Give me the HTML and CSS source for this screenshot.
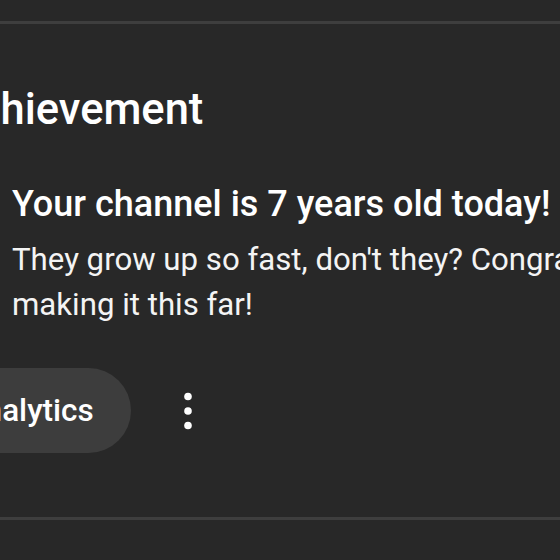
FILE: index.html
```html
<!DOCTYPE html>
<html lang="en">
<head>
<meta charset="utf-8">
<title>Achievement</title>
<link rel="stylesheet" href="styles.css">
</head>
<body>
<section class="card">
  <div class="inner">
    <h2 class="heading">Achievement</h2>
    <div class="content">
      <h3 class="title">Your channel is 7 years old today!</h3>
      <p class="desc">They grow up so fast, don't they? Congratulations on making it this far!</p>
    </div>
    <div class="actions">
      <button class="pill">Go to Analytics</button>
      <button class="more" aria-label="More actions">
        <svg width="60" height="60" viewBox="0 0 60 60" aria-hidden="true">
          <circle cx="30" cy="15.5" r="3.8" fill="#fff"/>
          <circle cx="30" cy="30" r="3.8" fill="#fff"/>
          <circle cx="30" cy="44.5" r="3.8" fill="#fff"/>
        </svg>
      </button>
    </div>
  </div>
</section>
</body>
</html>
```

FILE: styles.css
```css
html, body {
  margin: 0;
  padding: 0;
  background: #282828;
  overflow: hidden;
  width: 560px;
  height: 560px;
}

body {
  font-family: Roboto, "Liberation Sans", Arial, sans-serif;
  color: #fff;
}

.card {
  margin-top: 21px;
  border-top: 3px solid #3e3e3e;
  border-bottom: 3px solid #3e3e3e;
  height: 499px;
  box-sizing: border-box;
}

.inner {
  margin-left: -51px;
  padding-top: 60px;
}

.heading {
  margin: 0;
  font-size: 43.5px;
  line-height: 52px;
  font-weight: 500;
  white-space: nowrap;
}

.content {
  margin-left: 63px;
  margin-top: 46px;
}

.title {
  margin: 0;
  font-size: 36px;
  line-height: 44px;
  font-weight: 500;
  white-space: nowrap;
}

.desc {
  margin: 11px 0 0;
  width: 790px;
  font-size: 31.2px;
  line-height: 45px;
  font-weight: 400;
  color: #f4f4f4;
}

.actions {
  display: flex;
  align-items: center;
  gap: 27px;
  margin-top: 41px;
  margin-left: -104px;
}

.pill {
  height: 85px;
  padding: 0 37px 0 36px;
  border: none;
  border-radius: 43px;
  background: #3d3d3d;
  color: #fff;
  font-family: inherit;
  font-size: 31.5px;
  font-weight: 500;
  white-space: nowrap;
}

.more {
  width: 60px;
  height: 60px;
  padding: 0;
  border: none;
  background: none;
  display: flex;
}
```
